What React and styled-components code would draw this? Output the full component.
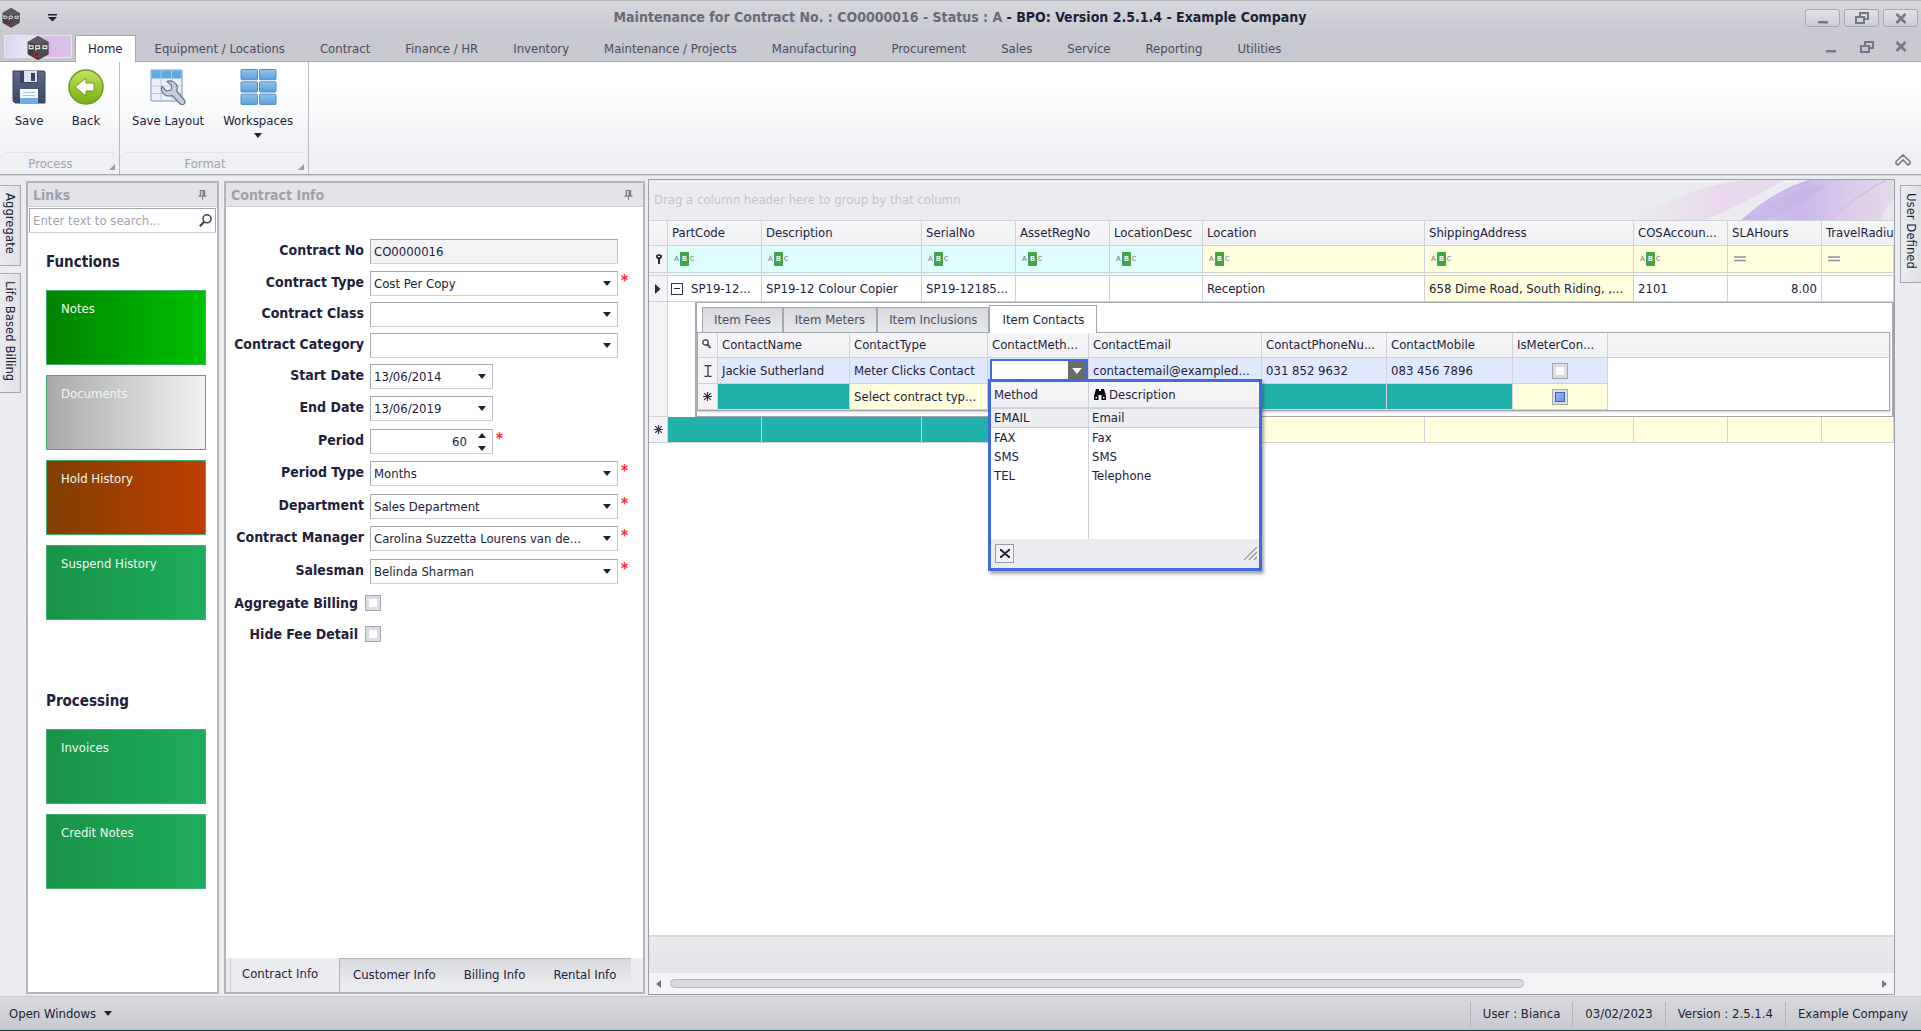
import React from "react";
import styled, { createGlobalStyle, css } from "styled-components";

const ink = "#22213a";
const line = "#a4a6b0";
const soft = "#cfd0d8";
const teal = "#20b2aa";
const pale = "#ffffde";
const aqua = "#dfffff";
const blue = "#4169e1";

const GlobalStyle = createGlobalStyle`
  *, *::before, *::after { box-sizing: border-box; }
  body { margin: 0; }
  body, button, input, select, table {
    font-family: "DejaVu Sans Condensed", "Noto Sans", sans-serif;
    font-size: 13px;
    line-height: 16px;
    color: ${ink};
  }
  button { border: 0; padding: 0; background: none; text-align: left; }
  h2 { margin: 0; }
`;

const Window = styled.div`
  display: flex;
  flex-direction: column;
  height: 100vh;
  overflow: hidden;
  background: #ebecef;
  border-bottom: 1px solid #16303c;
`;

/* ---------- title bar ---------- */
const TitleBar = styled.header`
  display: grid;
  grid-template-columns: 1fr auto 1fr;
  align-items: center;
  height: 35px;
  flex: none;
  padding: 0 3px 0 2px;
  border-top: 1px solid #b3b4bb;
  background: linear-gradient(#d7d8dd, #c7c8d0);
`;
const QuickAccess = styled.div`
  display: flex;
  align-items: center;
  gap: 28px;
`;
const Title = styled.h1`
  margin: 0;
  font-size: 14px;
  line-height: 18px;
  font-weight: bold;
  white-space: pre;
  color: ${ink};
  padding-bottom: 2px;
`;
const Dim = styled.span`color: #696a79;`;
const WindowButtons = styled.div`
  display: flex;
  justify-content: flex-end;
  gap: 4px;
`;
const WindowButton = styled.button`
  display: grid;
  place-items: center;
  width: 35px;
  height: 18px;
  border: 1px solid #a5a6b0;
  border-radius: 3px;
  background: linear-gradient(#e2e3e7, #cdced5);
`;

/* ---------- ribbon tabs ---------- */
const TabStrip = styled.nav`
  display: flex;
  flex: none;
  gap: 1px;
  height: 27px;
  padding: 0 4px;
  background: #c7c8d0;
  border-bottom: 1px solid ${line};
`;
const AppButton = styled.button`
  display: grid;
  place-items: center;
  width: 68px;
  height: 23px;
  margin-right: 2px;
  border: 1px solid #e9e4f2;
  background: linear-gradient(100deg, #d9d3f0, #eae4f6 35%, #dcb9e3 60%, #d9c4ea);
`;
const RibbonTab = styled.button`
  height: 27px;
  padding: 0 17px;
  white-space: nowrap;
  color: #4c4c60;
  ${(p) => p.$active && css`
    padding: 0 12px;
    margin-right: 1px;
    color: ${ink};
    background: #fff;
    border: 1px solid ${line};
    border-bottom: 0;
    border-radius: 2px 2px 0 0;
  `}
`;
const MdiButtons = styled.div`
  display: flex;
  gap: 23px;
  align-items: center;
  margin-left: auto;
  padding: 0 10px 3px 0;
`;
const MdiButton = styled.button`display: grid; place-items: center; width: 12px; height: 14px;`;

/* ---------- ribbon ---------- */
const Ribbon = styled.div`
  display: flex;
  flex: none;
  height: 113px;
  background: linear-gradient(#fff 20%, #eff0f4 85%);
  border-bottom: 1px solid ${line};
`;
const RibbonGroup = styled.section`
  display: flex;
  flex-direction: column;
  width: ${(p) => p.$width}px;
  border-right: 1px solid #b9bac4;
`;
const RibbonItems = styled.div`
  display: flex;
  flex: 1;
  gap: ${(p) => p.$gap}px;
  padding: 7px 0 0 12px;
`;
const RibbonItem = styled.button`
  display: flex;
  flex-direction: column;
  align-items: center;
  gap: 4px;
  white-space: nowrap;
  svg:first-child { margin-bottom: 4px; }
`;
const RibbonCaption = styled.div`
  display: grid;
  grid-template-columns: 1fr 18px;
  align-items: center;
  height: 22px;
  margin: 0 4px;
  text-align: center;
  color: #a1a3ae;
  border-top: 1px solid #e3e4e9;
`;
const Corner = styled.svg`justify-self: end; margin-top: 6px;`;
const Collapse = styled.button`
  margin-left: auto;
  align-self: flex-end;
  padding: 0 10px 4px 0;
`;

/* ---------- work area ---------- */
const WorkArea = styled.main`
  display: flex;
  flex: 1;
  min-height: 0;
  padding: 3px 0 1px;
  border-top: 1px solid #d5d6da;
`;
const SideTabs = styled.div`
  display: flex;
  flex-direction: column;
  gap: 7px;
  width: 26px;
  flex: none;
  padding-top: 6px;
  align-items: ${(p) => (p.$right ? "flex-end" : "flex-start")};
`;
const SideTab = styled.button`
  width: 21px;
  height: ${(p) => p.$height}px;
  padding: 7px 0;
  line-height: 19px;
  writing-mode: vertical-rl;
  white-space: nowrap;
  border: 1px solid ${line};
  ${(p) => (p.$right ? "border-right: 0;" : "border-left: 0;")}
  background: linear-gradient(90deg, #ebecef, #dfe0e5);
`;
const Panel = styled.section`
  display: flex;
  flex-direction: column;
  flex: none;
  width: ${(p) => p.$width}px;
  margin: 2px ${(p) => p.$gap}px 1px 0;
  border: 2px solid #b3b4bd;
  background: #fff;
`;
const PanelHeader = styled.div`
  display: flex;
  align-items: center;
  justify-content: space-between;
  height: 24px;
  flex: none;
  padding: 0 10px 0 5px;
  background: #e3e4e8;
  border-bottom: 1px solid #d0d1d7;
`;
const PanelTitle = styled.h2`
  font-size: 14px;
  line-height: 18px;
  color: #9fa1ad;
`;
const SearchBox = styled.label`
  display: flex;
  align-items: center;
  height: 25px;
  margin: 1px;
  padding: 0 3px;
  border: 1px solid ${line};
  border-bottom-color: ${soft};
  input {
    flex: 1;
    min-width: 0;
    padding: 0;
    border: 0;
    outline: 0;
    background: none;
  }
  input::placeholder { color: #a1a2ae; opacity: 1; }
`;
const LinkGroup = styled.section`
  display: flex;
  flex-direction: column;
  gap: 10px;
  padding: 18px 10px 0 18px;
  margin-bottom: ${(p) => p.$after || 0}px;
`;
const LinkHeading = styled.h2`
  font-size: 15px;
  line-height: 20px;
  margin-bottom: 8px;
`;
const Tile = styled.button`
  display: flex;
  width: 160px;
  height: 75px;
  padding: 10px 14px;
  color: #f1f8f1;
  border: 1px solid #3fb172;
  background: linear-gradient(90deg, ${(p) => p.$from}, ${(p) => p.$to});
`;

/* ---------- contract form ---------- */
const Form = styled.form`
  display: flex;
  flex-direction: column;
  flex: 1;
  padding-top: 32px;
`;
const FormRow = styled.div`
  display: grid;
  grid-template-columns: 138px auto 14px;
  justify-content: start;
  column-gap: 6px;
  height: 25px;
  margin-bottom: ${(p) => p.$after}px;
`;
const FieldLabel = styled.label`
  font-size: 14px;
  line-height: 22px;
  font-weight: bold;
  text-align: right;
  white-space: nowrap;
`;
const Field = styled.div`
  display: grid;
  width: ${(p) => (p.$short ? 123 : 248)}px;
  height: 25px;
  border: 1px solid ${line};
  border-bottom-color: ${soft};
  border-right-color: #bfc0ca;
  background: ${(p) => (p.$locked ? "#f3f3f6" : "#fff")};
  > * { grid-area: 1 / 1; }
  > svg { justify-self: end; align-self: center; margin-right: 6px; pointer-events: none; }
`;
const control = css`
  appearance: none;
  width: 100%;
  min-width: 0;
  border: 0;
  outline: 0;
  margin: 0;
  padding: 1px 25px 0 3px;
  background: none;
  border-radius: 0;
`;
const TextInput = styled.input`
  ${control}
  text-align: ${(p) => (p.$right ? "right" : "left")};
`;
const Select = styled.select`${control}`;
const Required = styled.span`
  color: #ff2a2a;
  font-size: 15px;
  font-weight: bold;
  line-height: 20px;
  margin-left: -3px;
`;
const CheckRow = styled.div`
  display: grid;
  grid-template-columns: 132px 16px;
  column-gap: 7px;
  align-items: center;
  height: 16px;
  margin-bottom: 15px;
`;
const Check = styled.input`
  appearance: none;
  display: inline-block;
  width: 16px;
  height: 16px;
  margin: 0;
  vertical-align: middle;
  border: 1px solid ${line};
  background: #fff;
  box-shadow: inset 0 0 0 3px #dcdde3;
  &:indeterminate {
    background: linear-gradient(135deg, #a9c4f5, #5f86dd);
    box-shadow: inset 0 0 0 2px #dcdde3, inset 0 0 0 3px #3d5fc0;
  }
`;
const BottomTabs = styled.div`
  display: flex;
  flex: none;
  height: 34px;
  padding-left: 4px;
  background: #ebecf0;
`;
const BottomTab = styled.button`
  padding: 0 15px 2px 13px;
  white-space: nowrap;
  ${(p) => p.$active
    ? css`width: 109px; padding-left: 11px; border-left: 1px solid ${soft};`
    : css`
        border-top: 1px solid #b5b6bf;
        background: linear-gradient(#d7d8dd, #ebecf0 80%);
        &:nth-child(2) { border-left: 1px solid #b5b6bf; }
      `}
`;

/* ---------- grid ---------- */
const GridPanel = styled.section`
  display: flex;
  flex-direction: column;
  flex: 1;
  min-width: 0;
  overflow: hidden;
  border: 1px solid #9c9eaa;
  background: #fff;
`;
const GroupBar = styled.div`
  display: flex;
  align-items: center;
  justify-content: space-between;
  flex: none;
  height: 41px;
  padding-left: 5px;
  color: #c3c4cc;
  background: #ebecef;
  border-bottom: 1px solid ${soft};
`;
const GridBody = styled.div`flex: 1; min-height: 0;`;
const Table = styled.table`
  width: 100%;
  table-layout: fixed;
  border-collapse: separate;
  border-spacing: 0;
`;
const cell = css`
  height: ${(p) => p.$height || 26}px;
  padding: 0 4px;
  font-weight: normal;
  text-align: ${(p) => p.$align || "left"};
  white-space: nowrap;
  overflow: hidden;
  border-right: 1px solid ${soft};
  border-bottom: 1px solid ${soft};
`;
const Th = styled.th`
  ${cell}
  height: ${(p) => p.$height || 25}px;
  background: linear-gradient(#f6f6f8, #f0f1f4);
  &:last-child { padding-right: 0; border-right: 0; }
`;
const Td = styled.td`
  ${cell}
  background: ${(p) => p.$bg || "#fff"};
`;
const FilterTd = styled(Td)`
  height: 30px;
  border-bottom: 4px double ${soft};
  padding: 0 6px;
  > * { display: flex; }
`;
const MarkTd = styled(Td)`
  padding: 0;
  text-align: center;
  background: #f4f4f7;
  svg { display: block; margin: 0 auto; }
`;
const RowFlex = styled.div`display: flex; align-items: center; gap: 8px;`;
const Expander = styled.button`
  display: grid;
  place-items: center;
  width: 12px;
  height: 12px;
  flex: none;
  border: 1px solid #33334a;
  margin-left: -1px;
`;
const Abc = styled.span`
  align-items: center;
  font: 8px/14px "Liberation Mono", monospace;
  color: #77798a;
  b {
    width: 9px;
    margin: 0 1px;
    text-align: center;
    color: #fff;
    background: #3fa648;
    border-radius: 1px;
  }
`;
const DetailTd = styled.td`
  padding: 0 0 0 27px;
  height: 115px;
  vertical-align: top;
`;
const Detail = styled.div`
  height: 115px;
  padding: 2px 2px 0 0;
  border: 1px solid ${line};
  border-width: 1px 2px 1px 2px;
`;
const DetailTabs = styled.div`
  display: flex;
  align-items: flex-end;
  padding-left: 5px;
  height: 27px;
`;
const DetailTab = styled.button`
  height: ${(p) => (p.$active ? 28 : 25)}px;
  padding: 0 ${(p) => (p.$active ? 12 : 11)}px;
  margin-bottom: ${(p) => (p.$active ? -1 : 0)}px;
  white-space: nowrap;
  border: 1px solid ${line};
  border-bottom: 0;
  color: ${(p) => (p.$active ? ink : "#4c4c60")};
  background: ${(p) => (p.$active ? "#fff" : "linear-gradient(#d7d8dd, #e8e9ed)")};
`;
const DetailGrid = styled.div`
  border: 1px solid ${line};
  box-shadow: 0 1px 2px #c4c5cc;
`;
const EditorTd = styled(Td)`
  position: relative;
  overflow: visible;
  padding: 0;
`;
const Editor = styled.div`
  display: flex;
  height: 23px;
  margin-left: 2px;
  border: 2px solid ${blue};
  background: #fff;
  input { flex: 1; min-width: 0; border: 0; outline: 0; padding: 0 3px; }
`;
const EditorButton = styled.button`
  display: grid;
  place-items: center;
  width: 18px;
  background: #6b6b6b;
`;
const Popup = styled.div`
  position: absolute;
  z-index: 2;
  top: 21px;
  left: 0;
  display: flex;
  flex-direction: column;
  width: 274px;
  height: 192px;
  border: 3px solid ${blue};
  background: #fff;
  box-shadow: 2px 3px 3px rgba(60, 60, 80, 0.45);
`;
const PopTable = styled(Table)`flex: none;`;
const PopTd = styled(Td)`
  height: ${(p) => p.$height || 19}px;
  padding: 0 3px;
  line-height: 16px;
  border-bottom: ${(p) => (p.$bg ? `1px solid ${soft}` : "0")};
  &:last-child { border-right: 0; }
`;
const PopTh = styled(Th)`
  height: 27px;
  padding: 0 3px;
  border-bottom-width: 2px;
  svg { vertical-align: -1px; margin: 0 3px 0 2px; }
`;
const PopFooter = styled.div`
  display: flex;
  align-items: center;
  justify-content: space-between;
  height: 29px;
  flex: none;
  padding: 0 2px 0 4px;
  background: #ebecef;
`;
const PopClose = styled.button`
  display: grid;
  place-items: center;
  width: 19px;
  height: 19px;
  border: 1px solid #9a9ba6;
  background: #f2f2f5;
`;
const GridFooter = styled.div`
  flex: none;
  height: 38px;
  border-top: 2px solid #d6d7dd;
  background: linear-gradient(#e9eaee, #e2e3e7);
`;
const ScrollBar = styled.div`
  display: flex;
  align-items: center;
  gap: 9px;
  flex: none;
  height: 21px;
  padding: 0 7px;
  background: #f4f4f7;
`;
const ScrollTrack = styled.div`flex: 1;`;
const ScrollThumb = styled.div`
  width: 71%;
  height: 9px;
  border: 1px solid #b4b5c2;
  border-radius: 5px;
  background: #d9dae0;
`;

/* ---------- status bar ---------- */
const StatusBar = styled.footer`
  display: flex;
  align-items: center;
  flex: none;
  height: 34px;
  padding: 0 1px 0 9px;
  border-top: 1px solid #c6c7cd;
  background: linear-gradient(#d9dade, #c8c9d0);
`;
const OpenWindows = styled.button`
  display: flex;
  align-items: center;
  gap: 8px;
  margin-right: auto;
`;
const StatusItem = styled.span`
  height: 24px;
  padding: 0 12px;
  line-height: 24px;
  border-left: 1px solid #b3b4bd;
`;

/* ---------- drawings ---------- */
const Down = ({ color = ink, w = 8 }) => (
  <svg width={w} height={w / 2 + 1} viewBox="0 0 8 5"><path d="M0 0h8L4 5z" fill={color} /></svg>
);
const Spin = () => (
  <svg width="8" height="18" viewBox="0 0 8 18"><path d="M0 5h8L4 0zM0 13h8l-4 5z" fill={ink} /></svg>
);
const Hex = ({ size }) => (
  <svg width={size} height={size * 1.1} viewBox="0 0 20 22">
    <path d="M10 0l9.500 5.500v11L10 22 .5 16.500v-11z" fill="#3f3f43" />
    <path d="M10 0l9.500 5.500L10 9 .5 5.500z" fill="#5a5a5f" />
    <path d="M10 11v11l9.500-5.500v-11z" fill="#4c4c50" />
    <path d="M2 7.500v4h3.500v-2.500H2M8 13.500V9h3.500v2.500H8M14.500 9h3.500v2.500h-3.500z" fill="none" stroke="#ececf0" strokeWidth="1" />
    <path d="M10 15.200a2.200 2.200 0 1 0 .2 2.600l1 1" fill="none" stroke="#c9202c" strokeWidth="1" />
  </svg>
);
const MinGlyph = () => <svg width="12" height="12"><path d="M1 9h10v2.500H1z" fill="#777887" /></svg>;
const RestoreGlyph = () => (
  <svg width="14" height="12" viewBox="0 0 14 12" fill="none" stroke="#777887" strokeWidth="2">
    <path d="M5 4V1h8v6h-3" /><path d="M1 5h8v6H1z" />
  </svg>
);
const CloseGlyph = () => (
  <svg width="12" height="11" viewBox="0 0 12 11" stroke="#777887" strokeWidth="2.600"><path d="M1.500 1l9 9M10.500 1l-9 9" /></svg>
);
const Pin = () => (
  <svg width="9" height="10" viewBox="0 0 9 11"><path d="M1.500 0h6v6H9v1.500H5V11H4V7.500H0V6h1.500z" fill="#7d7f8c" /><path d="M3 1h1.500v5H3z" fill="#e3e4e8" /></svg>
);
const SearchGlyph = ({ size = 13 }) => (
  <svg width={size} height={size} viewBox="0 0 13 13" fill="none" stroke="#3b3b50">
    <circle cx="8" cy="4.800" r="4" strokeWidth="1.500" /><path d="M5 8L.8 12.300" strokeWidth="2" />
  </svg>
);
const RowSearch = () => (
  <svg width="9" height="10" viewBox="0 0 9 10" fill="none" stroke="#3b3b50">
    <circle cx="3.500" cy="3.500" r="2.700" strokeWidth="1.300" /><path d="M5.500 5.500l3 3.500" strokeWidth="1.800" />
  </svg>
);
const Star = () => (
  <svg width="9" height="9" viewBox="0 0 9 9" stroke="#33334a" strokeWidth="1.200"><path d="M4.500 0v9M0 4.500h9M1.200 1.200l6.600 6.600M7.800 1.200L1.200 7.800" /></svg>
);
const Funnel = () => (
  <svg width="8" height="10" viewBox="0 0 8 10"><path d="M1 1.500Q4-1 7 1.500 7.500 4 5 5.500V10H3V5.500Q.5 4 1 1.500z" fill="#2b2b42" /><path d="M3 2h2v1H3z" fill="#fff" /></svg>
);
const Caret = () => <svg width="6" height="10"><path d="M0 0l5.500 5L0 10z" fill="#2b2b42" /></svg>;
const Beam = () => (
  <svg width="8" height="12" viewBox="0 0 8 12" fill="none" stroke="#2b2b42" strokeWidth="1.200"><path d="M.5 .6H3l1 1 1-1h2.500M4 1.500v9M.5 11.400H3l1-1 1 1h2.500" /></svg>
);
const Equals = () => <svg width="12" height="6"><path d="M0 1h12M0 4.500h12" stroke="#9192a0" strokeWidth="1.300" /></svg>;
const Binoculars = () => (
  <svg width="12" height="11" viewBox="0 0 12 11"><path d="M2 0h3v2h2V0h3l2 7v4H7.500V6h-3v5H0V7z" fill="#0c0c14" /><path d="M1.500 8h1.500v1.500H1.500zM9 8h1.500v1.500H9z" fill="#f4f4f7" /></svg>
);
const Grip = () => (
  <svg width="13" height="13" viewBox="0 0 13 13" stroke="#8b8c98" strokeWidth="1.200"><path d="M0 13L13 0M5 13l8-8M10 13l3-3" /></svg>
);
const SaveIcon = () => (
  <svg width="34" height="36" viewBox="0 0 34 36">
    <defs><linearGradient id="disk" x2="0" y2="1"><stop stopColor="#5c6988" /><stop offset="1" stopColor="#3d4866" /></linearGradient></defs>
    <path d="M1 2h31l1 1v31H3l-2-2z" fill="url(#disk)" stroke="#384260" />
    <path d="M8 2h18v12H8z" fill="#3b4563" /><path d="M12 2h13v11H12z" fill="#dfe3ec" /><path d="M19 4h4v8h-4z" fill="#35405e" />
    <path d="M8 20h18v14H8z" fill="#f4f7fc" /><path d="M8 29h18v5H8z" fill="#6fb1e6" />
    <path d="M11 23.500h12M11 26.500h12" stroke="#b8c1d3" />
  </svg>
);
const BackIcon = () => (
  <svg width="36" height="36" viewBox="0 0 36 36">
    <defs><linearGradient id="ball" x2="0" y2="1"><stop stopColor="#c6e26a" /><stop offset=".5" stopColor="#9cc92c" /><stop offset="1" stopColor="#78ad1d" /></linearGradient></defs>
    <circle cx="18" cy="18" r="17" fill="url(#ball)" stroke="#6d9a22" strokeWidth="1.500" />
    <path d="M7 18l11-9v5h8v8h-8v5z" fill="#fff" stroke="#6f9a2a" />
  </svg>
);
const LayoutIcon = () => (
  <svg width="36" height="36" viewBox="0 0 36 36">
    <path d="M1 1h31v31H1z" fill="#edf2fa" stroke="#7d95be" />
    <path d="M1.500 1.500h30v8h-30z" fill="#5fa9e2" />
    <path d="M11 2v30M21.500 2v30M1 17h31M1 24.500h31" stroke="#b9c8e0" />
    <path d="M17 12.500c4-1.500 9 .5 10 4.500.5 2 .3 3.500-.3 5l8 9.500c1.500 2.500-2 5.500-4.200 3.500L22 26.500c-4.500 1.500-9.500-.5-10.500-5.500-.2-1.300 0-2.500.5-3.500l4.500 4.500 4.500-1 .8-4.500z" fill="#c5cedb" stroke="#66718a" strokeWidth="1.200" strokeLinejoin="round" />
  </svg>
);
const WorkspacesIcon = () => (
  <svg width="37" height="36" viewBox="0 0 37 37">
    <defs><linearGradient id="pane" x2="0" y2="1"><stop stopColor="#90c4ec" /><stop offset="1" stopColor="#5c9ed8" /></linearGradient></defs>
    {[0, 1, 2].map((r) => [0, 1].map((c) => (
      <rect key={`${r}${c}`} x={0.5 + c * 19} y={0.5 + r * 12.7} width="17" height="10.500" rx="1" fill="url(#pane)" stroke="#4f8cc6" />
    )))}
  </svg>
);
const Swirl = () => (
  <svg width="260" height="40" viewBox="0 0 260 40">
    <defs>
      <linearGradient id="pinkWash"><stop stopColor="#ebecef" /><stop offset=".6" stopColor="#e9d3ea" /><stop offset="1" stopColor="#e3d6ee" /></linearGradient>
      <linearGradient id="violet" x2="1"><stop stopColor="#cfc5ee" /><stop offset=".4" stopColor="#ccb9ea" /><stop offset="1" stopColor="#e2dcea" /></linearGradient>
      <linearGradient id="rose" x1="0" x2="1"><stop stopColor="#dcc4e6" /><stop offset="1" stopColor="#e2dbe9" /></linearGradient>
    </defs>
    <path d="M0 40Q60 5 110 0H150Q110 24 70 40z" fill="url(#pinkWash)" opacity=".8" />
    <path d="M108 40Q138 12 176 0H260V40z" fill="url(#violet)" />
    <path d="M108 40Q150 8 192 5 170 26 130 40z" fill="#c5b3e8" opacity=".6" />
    <path d="M194 40Q222 14 250 0H260Q254 24 246 40z" fill="url(#rose)" />
    <path d="M246 40Q254 24 260 18V40z" fill="#e9e5ee" />
    <path d="M108 40Q138 12 176 0" fill="none" stroke="#b9abe4" />
    <path d="M196 40Q224 14 252 0" fill="none" stroke="#cfb1e0" />
  </svg>
);
const AbcMark = () => <Abc aria-hidden="true">A<b>B</b>C</Abc>;

/* ---------- data ---------- */
const ribbonTabs = ["Home", "Equipment / Locations", "Contract", "Finance / HR", "Inventory", "Maintenance / Projects", "Manufacturing", "Procurement", "Sales", "Service", "Reporting", "Utilities"];
const green = ["#18934a", "#1ead5c"];
const functions = [
  ["Notes", "#008300", "#00c000"],
  ["Documents", "#a9a9a9", "#f2f2f2"],
  ["Hold History", "#803f00", "#bf3f00"],
  ["Suspend History", ...green],
];
const processing = [["Invoices", ...green], ["Credit Notes", ...green]];
const fields = [
  { label: "Contract No", value: "CO0000016", kind: "text", after: 7 },
  { label: "Contract Type", value: "Cost Per Copy", required: true, after: 6 },
  { label: "Contract Class", value: "", after: 6 },
  { label: "Contract Category", value: "", after: 6 },
  { label: "Start Date", value: "13/06/2014", short: true, after: 7 },
  { label: "End Date", value: "13/06/2019", short: true, after: 8 },
  { label: "Period", value: "60", kind: "spin", short: true, required: true, after: 7 },
  { label: "Period Type", value: "Months", required: true, after: 8 },
  { label: "Department", value: "Sales Department", required: true, after: 7 },
  { label: "Contract Manager", value: "Carolina Suzzetta Lourens van de...", required: true, after: 8 },
  { label: "Salesman", value: "Belinda Sharman", required: true, after: 8 },
];
const columns = [
  ["PartCode", 94, aqua], ["Description", 160, aqua], ["SerialNo", 94, aqua], ["AssetRegNo", 94, aqua],
  ["LocationDesc", 93, aqua], ["Location", 222, pale], ["ShippingAddress", 209, pale],
  ["COSAccoun...", 94, pale], ["SLAHours", 94, pale, true], ["TravelRadiu", null, pale, true],
];
const contactColumns = [
  ["ContactName", 132], ["ContactType", 138], ["ContactMeth...", 101], ["ContactEmail", 173],
  ["ContactPhoneNu...", 125], ["ContactMobile", 126], ["IsMeterCon...", 95],
];
const methods = [["EMAIL", "Email"], ["FAX", "Fax"], ["SMS", "SMS"], ["TEL", "Telephone"]];

const FormField = ({ f }) => {
  const id = f.label.replace(/ /g, "-").toLowerCase();
  return (
    <FormRow $after={f.after}>
      <FieldLabel htmlFor={id}>{f.label}</FieldLabel>
      <Field $short={f.short} $locked={f.kind === "text"}>
        {f.kind ? (
          <TextInput id={id} defaultValue={f.value} readOnly={f.kind === "text"} $right={f.kind === "spin"} />
        ) : (
          <Select id={id} defaultValue={f.value}><option>{f.value}</option></Select>
        )}
        {f.kind === "spin" ? <Spin /> : !f.kind && <Down />}
      </Field>
      {f.required && <Required>*</Required>}
    </FormRow>
  );
};

const MethodPopup = () => (
  <Popup>
    <PopTable>
      <colgroup><col style={{ width: 98 }} /><col /></colgroup>
      <thead><tr><PopTh>Method</PopTh><PopTh><Binoculars />Description</PopTh></tr></thead>
      <tbody>
        {methods.map(([m, d], i) => (
          <tr key={m}><PopTd $bg={i === 0 && "#edeef1"}>{m}</PopTd><PopTd $bg={i === 0 && "#edeef1"}>{d}</PopTd></tr>
        ))}
        <tr><PopTd $height={54} /><PopTd $height={54} /></tr>
      </tbody>
    </PopTable>
    <PopFooter>
      <PopClose aria-label="Clear">
        <svg width="10" height="9" viewBox="0 0 10 9" stroke={ink} strokeWidth="2" fill="none"><path d="M0 1h1l8 7h1M10 1H9L1 8H0" /></svg>
      </PopClose>
      <Grip />
    </PopFooter>
  </Popup>
);

const TriState = () => {
  const ref = React.useRef(null);
  React.useEffect(() => { ref.current.indeterminate = true; }, []);
  return <Check type="checkbox" aria-label="Is meter contact" ref={ref} />;
};

const Contacts = () => (
  <Detail>
    <DetailTabs>
      {["Item Fees", "Item Meters", "Item Inclusions"].map((t) => <DetailTab key={t}>{t}</DetailTab>)}
      <DetailTab $active>Item Contacts</DetailTab>
    </DetailTabs>
    <DetailGrid>
      <Table>
        <colgroup>
          <col style={{ width: 20 }} />
          {contactColumns.map(([n, w]) => <col key={n} style={{ width: w }} />)}
          <col />
        </colgroup>
        <thead>
          <tr>
            <Th><RowSearch /></Th>
            {contactColumns.map(([n]) => <Th key={n}>{n}</Th>)}
            <Th />
          </tr>
        </thead>
        <tbody>
          <tr>
            <MarkTd><Beam /></MarkTd>
            <Td $bg="#e0e8fd">Jackie Sutherland</Td>
            <Td $bg="#e0e8fd">Meter Clicks Contact</Td>
            <EditorTd $bg="#e0e8fd">
              <Editor>
                <input aria-label="Contact method" />
                <EditorButton aria-label="Open list"><Down color="#fff" w={10} /></EditorButton>
              </Editor>
              <MethodPopup />
            </EditorTd>
            <Td $bg="#e0e8fd">contactemail@exampled...</Td>
            <Td $bg="#e0e8fd">031 852 9632</Td>
            <Td $bg="#e0e8fd">083 456 7896</Td>
            <Td $bg="#e0e8fd" $align="center"><Check type="checkbox" aria-label="Is meter contact" /></Td>
            <td />
          </tr>
          <tr>
            <MarkTd><Star /></MarkTd>
            <Td $bg={teal} />
            <Td $bg={pale}>Select contract typ...</Td>
            <Td $bg={teal} />
            <Td $bg={teal} />
            <Td $bg={teal} />
            <Td $bg={teal} />
            <Td $bg={pale} $align="center"><TriState /></Td>
            <td />
          </tr>
        </tbody>
      </Table>
    </DetailGrid>
  </Detail>
);

export default function App() {
  return (
    <Window>
      <GlobalStyle />
      <TitleBar>
        <QuickAccess>
          <Hex size={18} />
          <svg width="9" height="8" viewBox="0 0 9 8"><path d="M0 0h9v1.500H0zM0 3h9L4.500 7.500z" fill={ink} /></svg>
        </QuickAccess>
        <Title><Dim>Maintenance for Contract No. : CO0000016 - Status : A</Dim> - BPO: Version 2.5.1.4 - Example Company</Title>
        <WindowButtons>
          <WindowButton aria-label="Minimize"><MinGlyph /></WindowButton>
          <WindowButton aria-label="Restore"><RestoreGlyph /></WindowButton>
          <WindowButton aria-label="Close"><CloseGlyph /></WindowButton>
        </WindowButtons>
      </TitleBar>
      <TabStrip>
        <AppButton aria-label="Application menu"><Hex size={22} /></AppButton>
        {ribbonTabs.map((t, i) => <RibbonTab key={t} $active={i === 0}>{t}</RibbonTab>)}
        <MdiButtons>
          <MdiButton aria-label="Minimize document"><MinGlyph /></MdiButton>
          <MdiButton aria-label="Restore document"><RestoreGlyph /></MdiButton>
          <MdiButton aria-label="Close document"><CloseGlyph /></MdiButton>
        </MdiButtons>
      </TabStrip>
      <Ribbon>
        <RibbonGroup $width={120}>
          <RibbonItems $gap={22}>
            <RibbonItem><SaveIcon />Save</RibbonItem>
            <RibbonItem><BackIcon />Back</RibbonItem>
          </RibbonItems>
          <RibbonCaption><span>Process</span><Corner width="6" height="6"><path d="M6 0v6H0z" fill="#9a9ca8" /></Corner></RibbonCaption>
        </RibbonGroup>
        <RibbonGroup $width={189}>
          <RibbonItems $gap={19}>
            <RibbonItem><LayoutIcon />Save Layout</RibbonItem>
            <RibbonItem><WorkspacesIcon />Workspaces<Down /></RibbonItem>
          </RibbonItems>
          <RibbonCaption><span>Format</span><Corner width="6" height="6"><path d="M6 0v6H0z" fill="#9a9ca8" /></Corner></RibbonCaption>
        </RibbonGroup>
        <Collapse aria-label="Collapse ribbon">
          <svg width="16" height="12" viewBox="0 0 16 12" fill="none" stroke="#777887" strokeWidth="1.600"><path d="M1 7.500L8 1l7 6.500v2l-2 1.500-5-5-5 5-2-1.500z" /></svg>
        </Collapse>
      </Ribbon>
      <WorkArea>
        <SideTabs>
          <SideTab $height={81}>Aggregate</SideTab>
          <SideTab $height={120}>Life Based Billing</SideTab>
        </SideTabs>
        <Panel $width={193} $gap={5}>
          <PanelHeader><PanelTitle>Links</PanelTitle><Pin /></PanelHeader>
          <SearchBox>
            <input type="text" aria-label="Search links" placeholder="Enter text to search..." />
            <SearchGlyph />
          </SearchBox>
          <LinkGroup $after={53}>
            <LinkHeading>Functions</LinkHeading>
            {functions.map(([t, a, b]) => <Tile key={t} $from={a} $to={b}>{t}</Tile>)}
          </LinkGroup>
          <LinkGroup>
            <LinkHeading>Processing</LinkHeading>
            {processing.map(([t, a, b]) => <Tile key={t} $from={a} $to={b}>{t}</Tile>)}
          </LinkGroup>
        </Panel>
        <Panel $width={421} $gap={3}>
          <PanelHeader><PanelTitle>Contract Info</PanelTitle><Pin /></PanelHeader>
          <Form>
            {fields.map((f) => <FormField key={f.label} f={f} />)}
            <CheckRow><FieldLabel htmlFor="agg">Aggregate Billing</FieldLabel><Check id="agg" type="checkbox" /></CheckRow>
            <CheckRow><FieldLabel htmlFor="hide">Hide Fee Detail</FieldLabel><Check id="hide" type="checkbox" /></CheckRow>
          </Form>
          <BottomTabs>
            <BottomTab $active>Contract Info</BottomTab>
            <BottomTab>Customer Info</BottomTab>
            <BottomTab>Billing Info</BottomTab>
            <BottomTab>Rental Info</BottomTab>
          </BottomTabs>
        </Panel>
        <GridPanel>
          <GroupBar>Drag a column header here to group by that column<Swirl /></GroupBar>
          <GridBody>
            <Table>
              <colgroup>
                <col style={{ width: 19 }} />
                {columns.map(([n, w]) => <col key={n} style={w ? { width: w } : undefined} />)}
              </colgroup>
              <thead>
                <tr><Th />{columns.map(([n]) => <Th key={n}>{n}</Th>)}</tr>
              </thead>
              <tbody>
                <tr>
                  <FilterTd $bg="#f4f4f7"><Funnel /></FilterTd>
                  {columns.map(([n, , bg, num]) => <FilterTd key={n} $bg={bg}>{num ? <Equals /> : <AbcMark />}</FilterTd>)}
                </tr>
                <tr>
                  <MarkTd><Caret /></MarkTd>
                  <Td>
                    <RowFlex>
                      <Expander aria-label="Collapse row"><svg width="6" height="2"><path d="M0 0h6v1H0z" fill={ink} /></svg></Expander>
                      SP19-12...
                    </RowFlex>
                  </Td>
                  <Td>SP19-12 Colour Copier</Td>
                  <Td>SP19-12185...</Td>
                  <Td /><Td />
                  <Td>Reception</Td>
                  <Td $bg={pale}>658 Dime Road, South Riding, ,...</Td>
                  <Td>2101</Td>
                  <Td $align="right">8.00</Td>
                  <Td />
                </tr>
                <tr>
                  <MarkTd />
                  <DetailTd colSpan={10}><Contacts /></DetailTd>
                </tr>
                <tr>
                  <MarkTd><Star /></MarkTd>
                  {columns.map(([n, , bg]) => <Td key={n} $bg={bg === aqua ? teal : pale} />)}
                </tr>
              </tbody>
            </Table>
          </GridBody>
          <GridFooter />
          <ScrollBar>
            <svg width="5" height="8"><path d="M5 0v8L0 4z" fill="#777887" /></svg>
            <ScrollTrack><ScrollThumb /></ScrollTrack>
            <svg width="5" height="8"><path d="M0 0v8l5-4z" fill="#777887" /></svg>
          </ScrollBar>
        </GridPanel>
        <SideTabs $right>
          <SideTab $right $height={98}>User Defined</SideTab>
        </SideTabs>
      </WorkArea>
      <StatusBar>
        <OpenWindows>Open Windows<Down /></OpenWindows>
        <StatusItem>User : Bianca</StatusItem>
        <StatusItem>03/02/2023</StatusItem>
        <StatusItem>Version : 2.5.1.4</StatusItem>
        <StatusItem>Example Company</StatusItem>
      </StatusBar>
    </Window>
  );
}
